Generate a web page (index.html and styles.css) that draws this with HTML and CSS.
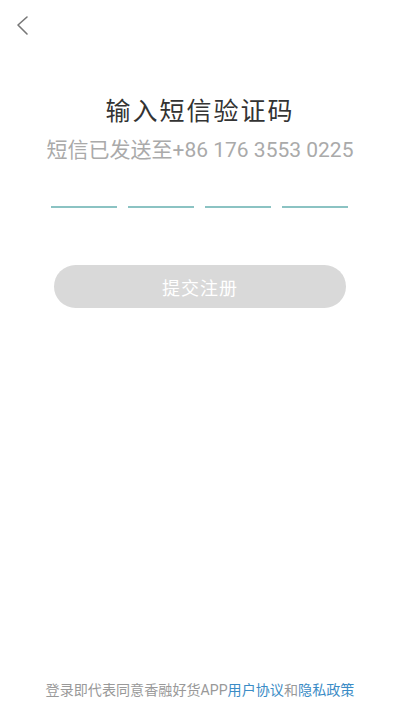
FILE: index.html
```html
<!DOCTYPE html>
<html lang="zh-CN">
<head>
<meta charset="utf-8">
<title>输入短信验证码</title>
<link rel="stylesheet" href="styles.css">
</head>
<body>
<div class="page">
  <div class="topbar">
    <svg class="back" width="16" height="22" viewBox="0 0 16 22"><path d="M12 2 L3 10 L12 19" fill="none" stroke="#777" stroke-width="1.6" stroke-linecap="round" stroke-linejoin="round"/></svg>
  </div>
  <h1 class="title">输入短信验证码</h1>
  <p class="subtitle">短信已发送至+86 176 3553 0225</p>
  <div class="codes">
    <span class="code"></span>
    <span class="code"></span>
    <span class="code"></span>
    <span class="code"></span>
  </div>
  <button class="submit">提交注册</button>
  <div class="spacer"></div>
  <p class="footer">登录即代表同意香融好货APP<span class="link">用户协议</span>和<span class="link">隐私政策</span></p>
</div>
</body>
</html>
```
FILE: styles.css
```css
html, body {
  margin: 0;
  padding: 0;
  background: #fff;
}
body {
  font-family: Roboto, "Noto Sans CJK SC", sans-serif;
}
.page {
  width: 400px;
  height: 710px;
  display: flex;
  flex-direction: column;
  align-items: center;
  box-sizing: border-box;
}
.topbar {
  align-self: stretch;
  height: 40px;
  padding: 15px 0 0 15px;
  box-sizing: border-box;
}
.back {
  display: block;
}
.title {
  margin: 55px 0 0;
  font-size: 25px;
  font-weight: 400;
  letter-spacing: 2px;
  color: #333;
  line-height: 34px;
  height: 34px;
}
.subtitle {
  margin: 8px 0 0;
  font-size: 21px;
  color: #aaa;
  line-height: 26px;
}
.codes {
  margin-top: 43px;
  display: flex;
  gap: 11px;
  transform: translateX(-1px);
}
.code {
  display: block;
  width: 66px;
  height: 2px;
  background: #8bc3c3;
}
.submit {
  margin-top: 57px;
  width: 292px;
  height: 43px;
  border: none;
  border-radius: 22px;
  background: #d9d9d9;
  color: #fff;
  font-family: Roboto, "Noto Sans CJK SC", sans-serif;
  font-size: 18px;
  letter-spacing: 1px;
  padding: 0;
}
.spacer {
  flex: 1;
}
.footer {
  margin: 0 0 11px;
  font-size: 14.1px;
  color: #999;
  line-height: 18px;
}
.link {
  color: #3b8cc6;
}
```
